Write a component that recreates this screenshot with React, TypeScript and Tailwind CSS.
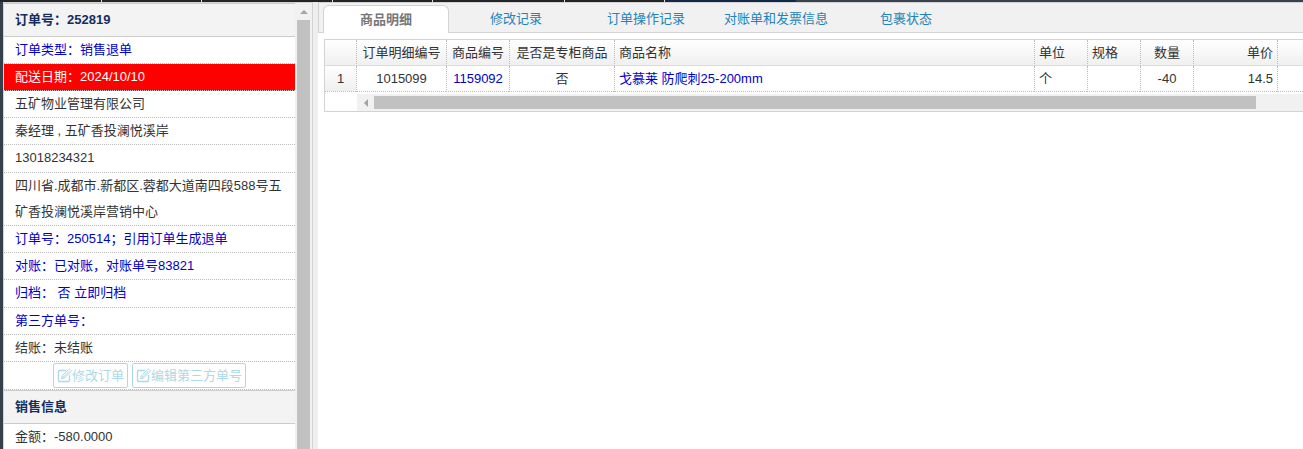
import type { ReactNode } from "react";

const navSegments = ["w-[102px]", "w-[100px]", "w-[131px]", "w-[100px]", "w-[132px]", "w-[100px]"];

const tabs = ["商品明细", "修改记录", "订单操作记录", "对账单和发票信息", "包裹状态"];

type Align = "text-left" | "text-center" | "text-right";

const columns: { label: string; width: string; align: Align; value: string; link?: boolean }[] = [
  { label: "订单明细编号", width: "w-[90px]", align: "text-center", value: "1015099" },
  { label: "商品编号", width: "w-[63px]", align: "text-center", value: "1159092", link: true },
  { label: "是否是专柜商品", width: "w-[105px]", align: "text-center", value: "否" },
  { label: "商品名称", width: "w-[420px]", align: "text-left", value: "戈慕莱 防爬刺25-200mm", link: true },
  { label: "单位", width: "w-[53px]", align: "text-left", value: "个" },
  { label: "规格", width: "w-[53px]", align: "text-left", value: "" },
  { label: "数量", width: "w-[53px]", align: "text-center", value: "-40" },
  { label: "单价", width: "w-[84px]", align: "text-right", value: "14.5" },
];

export default function App() {
  return (
    <div className="flex h-screen flex-col overflow-hidden bg-white font-['Liberation_Sans','Noto_Sans_CJK_SC',sans-serif] text-[13px] text-[#333]">
      <NavEdge />
      <div className="flex min-h-0 flex-1">
        <div className="w-[3px] shrink-0 bg-[#35404d]" />
        <OrderPanel />
        <div className="w-[5px] shrink-0 bg-[#eee]" />
        <main className="min-w-0 flex-1">
          <TabStrip />
          <DetailGrid />
        </main>
      </div>
    </div>
  );
}

/** Lower edge of the application's navigation bar. */
function NavEdge() {
  return (
    <div className="flex h-0.5 shrink-0 bg-[#3a4250]">
      {navSegments.map((width, i) => (
        <div key={i} className={`${width} shrink-0 border-r border-[#ddd] bg-[#222428]`} />
      ))}
      <div className="w-[131px] shrink-0 bg-[#14284a]" />
    </div>
  );
}

function OrderPanel() {
  return (
    <aside className="flex w-[310px] shrink-0 border-x border-t border-[#d3d3d3] bg-white">
      <div className="min-w-0 flex-1 overflow-hidden">
        <SectionTitle>订单号：252819</SectionTitle>
        <Row className="text-[#00c]">订单类型：销售退单</Row>
        <Row className="bg-[#f00] text-white">配送日期：2024/10/10</Row>
        <Row>五矿物业管理有限公司</Row>
        <Row>秦经理 , 五矿香投澜悦溪岸</Row>
        <Row className="min-h-7">
          <a href="tel:13018234321">13018234321</a>
        </Row>
        <Row>四川省.成都市.新都区.蓉都大道南四段588号五矿香投澜悦溪岸营销中心</Row>
        <Row className="text-[#00c]">订单号：250514；引用订单生成退单</Row>
        <Row className="text-[#00c]">对账：已对账，对账单号83821</Row>
        <Row className="min-h-7 text-[#00c]">
          归档： 否 <a href="#archive">立即归档</a>
        </Row>
        <Row className="text-[#00c]">第三方单号：</Row>
        <Row>结账：未结账</Row>
        <div className="flex h-7 items-center justify-center gap-1 border-b border-dotted border-[#bbb]">
          <EditButton>修改订单</EditButton>
          <EditButton>编辑第三方单号</EditButton>
        </div>
        <SectionTitle>销售信息</SectionTitle>
        <Row>金额：-580.0000</Row>
      </div>
      <VerticalScrollbar />
    </aside>
  );
}

function SectionTitle({ children }: { children: ReactNode }) {
  return (
    <h2 className="border-y border-[#ccc] bg-[#f3f3f3] px-[11px] leading-8 font-bold text-[#162d5f]">
      {children}
    </h2>
  );
}

function Row({ children, className = "" }: { children: ReactNode; className?: string }) {
  return (
    <p className={`border-b border-dotted border-[#bbb] px-[11px] leading-[26px] ${className}`}>
      {children}
    </p>
  );
}

function EditButton({ children }: { children: ReactNode }) {
  return (
    <button
      type="button"
      className="flex h-[25px] items-center rounded-xs border border-[#add8e6] px-[3px] text-[#add8e6]"
    >
      <EditIcon />
      {children}
    </button>
  );
}

function EditIcon() {
  return (
    <svg viewBox="0 0 15 15" className="size-[15px]" fill="none" stroke="currentColor" aria-hidden>
      <path d="M9 2.500H2.500A1 1 0 0 0 1.500 3.500v9a1 1 0 0 0 1 1h9a1 1 0 0 0 1-1V7" strokeWidth="1.3" />
      <path d="M4.500 10.800l.8-3L11.800 1.300a.8.8 0 0 1 1.200 0l1 1a.8.8 0 0 1 0 1.200L7.500 10zM5.300 7.800L7.500 10M6.500 9l6-6" />
    </svg>
  );
}

function VerticalScrollbar() {
  return (
    <div className="flex w-[17px] shrink-0 flex-col bg-[#f1f1f1] px-0.5">
      <div className="flex h-[17px] shrink-0 items-center justify-center">
        <svg viewBox="0 0 8 4" className="h-1 w-2 fill-[#a3a3a3]" aria-hidden>
          <path d="M0 4l4-4 4 4z" />
        </svg>
      </div>
      <div className="flex-1 bg-[#c1c1c1]" />
    </div>
  );
}

function TabStrip() {
  return (
    <div
      role="tablist"
      className="flex gap-1 border-t border-b border-l border-[#d3d3d3] bg-[#f1f1f1] pt-0.5 pl-1"
    >
      {tabs.map((label, i) => (
        <button
          key={label}
          type="button"
          role="tab"
          aria-selected={i === 0}
          className={
            i === 0
              ? "-mb-px h-7 w-[126px] rounded-t-md border border-b-0 border-[#d3d3d3] bg-white font-bold text-[#777]"
              : "h-[27px] w-[126px] text-[#2483b8]"
          }
        >
          {label}
        </button>
      ))}
    </div>
  );
}

function DetailGrid() {
  return (
    <div className="mt-1.5 ml-1.5 border-y border-l border-[#d3d3d3]">
      <table className="w-full table-fixed border-separate border-spacing-0 leading-[25px]">
        <thead>
          <tr className="bg-linear-to-b from-white to-[#efefef]">
            <th className="w-[31px] border-b border-[#ddd]" />
            {columns.map((c) => (
              <th
                key={c.label}
                scope="col"
                className={`${c.width} ${c.align} border-b border-l border-b-[#ddd] border-l-[#bbb] px-1 font-normal whitespace-nowrap [border-left-style:dotted]`}
              >
                {c.label}
              </th>
            ))}
            <th className="border-b border-l border-b-[#ddd] border-l-[#bbb] [border-left-style:dotted]" />
          </tr>
        </thead>
        <tbody>
          <tr>
            <th
              scope="row"
              className="border-b border-dotted border-[#bbb] bg-linear-to-b from-white to-[#efefef] font-normal"
            >
              1
            </th>
            {columns.map((c) => (
              <td
                key={c.label}
                className={`${c.align} border-b border-l border-dotted border-[#bbb] px-1 whitespace-nowrap`}
              >
                {c.link ? (
                  <a href="#product" className="text-[#00c]">
                    {c.value}
                  </a>
                ) : (
                  c.value
                )}
              </td>
            ))}
            <td className="border-b border-l border-dotted border-[#bbb]" />
          </tr>
        </tbody>
      </table>
      <div className="mt-0.5 ml-8 flex h-[17px] items-center bg-[#f1f1f1]">
        <div className="flex w-[17px] shrink-0 justify-center">
          <svg viewBox="0 0 4 8" className="h-2 w-1 fill-[#a3a3a3]" aria-hidden>
            <path d="M4 0v8L0 4z" />
          </svg>
        </div>
        <div className="mr-[47px] h-[13px] flex-1 bg-[#c1c1c1]" />
      </div>
    </div>
  );
}
